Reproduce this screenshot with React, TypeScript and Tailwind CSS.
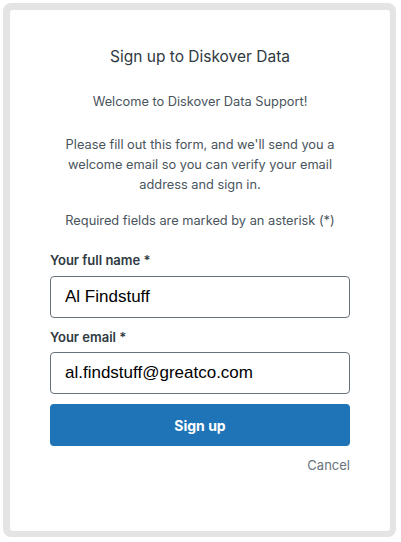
export default function App() {
  return (
    <div className="w-[401px] h-[542px] bg-white pt-[3px] pl-[3px] pr-[5px] pb-[5px] font-['Inter',sans-serif]">
      <div className="h-full rounded-[8px] bg-[#e4e4e4] pt-[7px] pl-[7px] pr-[6px] pb-[6px]">
        <div className="h-full rounded-[3px] bg-white flex flex-col items-center pt-[36px]">
          <h1 className="text-[15.5px] leading-[22px] text-[#2f3941]">Sign up to Diskover Data</h1>

          <div className="mt-[24px] w-[300px] text-center text-[12.8px] leading-[20px] text-[#49545c]">
            <p>Welcome to Diskover Data Support!</p>
            <p className="mt-[23px]">
              Please fill out this form, and we'll send you a welcome email so you can verify your email address and sign in.
            </p>
            <p className="mt-[16px]">Required fields are marked by an asterisk (*)</p>
          </div>

          <form className="mt-[19px] w-[300px] flex flex-col" onSubmit={(e) => e.preventDefault()}>
            <label className="text-[13px] leading-[20px] font-semibold text-[#2f3941]">Your full name *</label>
            <input
              defaultValue="Al Findstuff"
              className="mt-[6px] h-[42px] w-full rounded-[4px] border border-[#68737d] px-[14px] text-[17px] text-black font-['Liberation_Sans',sans-serif] outline-none"
            />
            <label className="mt-[9px] text-[13px] leading-[20px] font-semibold text-[#2f3941]">Your email *</label>
            <input
              defaultValue="al.findstuff@greatco.com"
              className="mt-[5px] h-[42px] w-full rounded-[4px] border border-[#68737d] px-[14px] text-[17px] text-black font-['Liberation_Sans',sans-serif] outline-none"
            />
            <button
              type="submit"
              className="mt-[10px] h-[42px] w-full rounded-[4px] bg-[#1f73b7] text-white text-[14px] font-bold"
            >
              Sign up
            </button>
            <div className="mt-[9px] flex justify-end">
              <span className="text-[13px] leading-[20px] text-[#68737d]">Cancel</span>
            </div>
          </form>
        </div>
      </div>
    </div>
  );
}
